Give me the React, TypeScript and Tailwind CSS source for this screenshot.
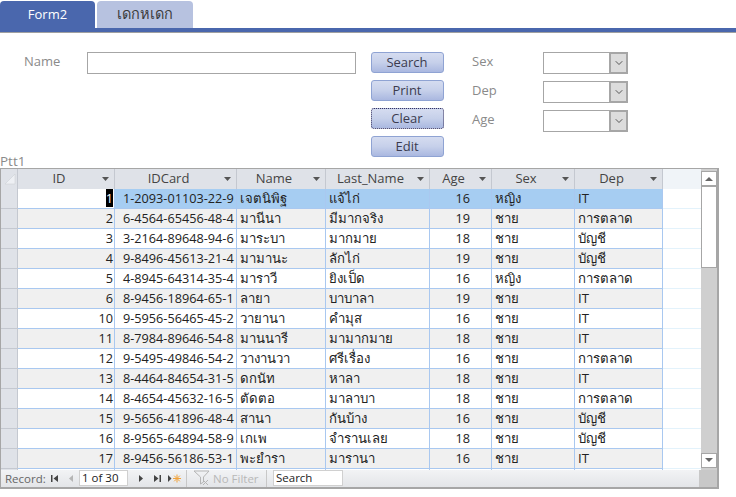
import { ChevronDown } from 'lucide-react'

const rows = [
  ['1', '1-2093-01103-22-9', 'เจตนิพิฐ', 'แจ้ไก่', '16', 'หญิง', 'IT'],
  ['2', '6-4564-65456-48-4', 'มานีนา', 'มีมากจริง', '19', 'ชาย', 'การตลาด'],
  ['3', '3-2164-89648-94-6', 'มาระบา', 'มากมาย', '18', 'ชาย', 'บัญชี'],
  ['4', '9-8496-45613-21-4', 'มามานะ', 'ลักไก่', '19', 'ชาย', 'บัญชี'],
  ['5', '4-8945-64314-35-4', 'มาราวี', 'ยิงเป็ด', '16', 'หญิง', 'การตลาด'],
  ['6', '8-9456-18964-65-1', 'ลายา', 'บาบาลา', '19', 'ชาย', 'IT'],
  ['10', '9-5956-56465-45-2', 'วายานา', 'คำมุส', '16', 'ชาย', 'IT'],
  ['11', '8-7984-89646-54-8', 'มานนารี', 'มามากมาย', '18', 'ชาย', 'IT'],
  ['12', '9-5495-49846-54-2', 'วางานวา', 'ศรีเรื่อง', '16', 'ชาย', 'การตลาด'],
  ['13', '8-4464-84654-31-5', 'ดกนัท', 'หาลา', '18', 'ชาย', 'IT'],
  ['14', '8-4654-45632-16-5', 'ตัดตอ', 'มาลาบา', '18', 'ชาย', 'การตลาด'],
  ['15', '9-5656-41896-48-4', 'สานา', 'กันบ้าง', '16', 'ชาย', 'บัญชี'],
  ['16', '8-9565-64894-58-9', 'เกเพ', 'จำรานเลย', '18', 'ชาย', 'บัญชี'],
  ['17', '8-9456-56186-53-1', 'พะยำรา', 'มารานา', '16', 'ชาย', 'IT'],
  ['', '', '', '', '', '', ''],
]

const cols = [
  { label: 'ID', w: 'w-[97px]' },
  { label: 'IDCard', w: 'w-[122px]' },
  { label: 'Name', w: 'w-[89px]' },
  { label: 'Last_Name', w: 'w-[104px]' },
  { label: 'Age', w: 'w-[62px]' },
  { label: 'Sex', w: 'w-[83px]' },
  { label: 'Dep', w: 'w-[88px]' },
]

function Btn({ label, focused }: { label: string; focused?: boolean }) {
  return (
    <button
      className={`w-[73px] h-[21px] rounded-[3px] border bg-gradient-to-b from-[#d5dcf0] via-[#c6d0ea] to-[#aab8e0] text-[13px] leading-[17px] pb-[1px] pr-[1px] text-[#3b3b4f] ${
        focused ? 'border-dotted border-[#3a3560]' : 'border-[#8fa3d3]'
      }`}
    >
      {label}
    </button>
  )
}

function Combo({ label }: { label: string }) {
  return (
    <div className="flex items-center h-[22px]">
      <span className="w-[71px] text-[13px] text-[#8a8a8a] -mt-[2px]">{label}</span>
      <div className="w-[85px] h-[22px] border border-[#a6a6a6] bg-white flex justify-end">
        <div className="w-[18px] h-full bg-[#dcdcdc] border-2 border-r-[1px] border-y-[1px] border-[#a6a6a6] flex items-center justify-center">
          <ChevronDown size={12} strokeWidth={1.6} className="text-[#333]" />
        </div>
      </div>
    </div>
  )
}

function Arrow() {
  return (
    <svg width="7" height="4" viewBox="0 0 7 4" className="absolute right-[5px] top-[8px]">
      <path d="M0 0h7L3.500 4z" fill="#555" />
    </svg>
  )
}

function Nav() {
  return (
    <div className="flex items-center h-full">
      <svg width="8" height="9" viewBox="0 0 8 9">
        <path d="M0 1h1.500v7H0zM7 1v7L2.500 4.500z" fill="#444" />
      </svg>
      <svg width="6" height="9" viewBox="0 0 6 9" className="ml-[9px]">
        <path d="M5 1v7L1 4.500z" fill="#b5b5b5" />
      </svg>
      <div className="ml-[5px] w-[49px] h-[16px] bg-white border border-[#d0d0d0] text-[11.5px] leading-[14px] pl-[2px] text-[#222]">
        1 of 30
      </div>
      <svg width="6" height="9" viewBox="0 0 6 9" className="ml-[10px]">
        <path d="M1 1v7l4-3.500z" fill="#444" />
      </svg>
      <svg width="8" height="9" viewBox="0 0 8 9" className="ml-[10px]">
        <path d="M0 1v7l4.500-3.500zM5.500 1H7v7H5.500z" fill="#444" />
      </svg>
      <svg width="13" height="9" viewBox="0 0 13 9" className="ml-[6px]">
        <path d="M0 1v7l3.500-3.500z" fill="#444" />
        <path d="M9 .5v8M5 4.500h8M6.200 1.700l5.600 5.600M11.800 1.700l-5.600 5.600" stroke="#f2a33a" strokeWidth="1" />
      </svg>
    </div>
  )
}

export default function App() {
  return (
    <div className="w-[736px] h-[497px] bg-white overflow-hidden font-['Open_Sans','Noto_Sans',sans-serif]">
      <div className="h-[33px] border-b border-[#a0a0a0] flex flex-col justify-between">
        <div className="flex pt-[1px] gap-[2px] h-[28px]">
          <div className="w-[95px] rounded-t-[4px] bg-[#4a67ad] text-white text-[13px] text-center leading-[26px] h-[31px]">
            Form2
          </div>
          <div className="w-[96px] rounded-t-[4px] bg-[#b7c2e0] text-[#3c3c3c] text-[14.5px] text-center leading-[25px]">
            เดกหเดก
          </div>
        </div>
        <div className="h-[4px] bg-[#4a67ad]" />
      </div>

      <div className="h-[135px] relative flex">
        <div className="flex items-start pt-[19px] pl-[24px] w-[371px]">
          <span className="w-[63px] text-[13px] text-[#8a8a8a]">Name</span>
          <div className="w-[269px] h-[22px] border border-[#a6a6a6]" />
        </div>
        <div className="flex flex-col gap-[7px] pt-[19px] w-[101px]">
          <Btn label="Search" />
          <Btn label="Print" />
          <Btn label="Clear" focused />
          <Btn label="Edit" />
        </div>
        <div className="flex flex-col gap-[7px] pt-[19px]">
          <Combo label="Sex" />
          <Combo label="Dep" />
          <Combo label="Age" />
        </div>
        <span className="absolute left-0 bottom-0 text-[13.5px] leading-[14px] text-[#8a8a8a]">Ptt1</span>
      </div>

      <div className="w-[719px] h-[321px] border border-[#a6a6a6] border-r-2 border-b-2 flex flex-col text-[12.7px] text-[#222]">
        <div className="flex h-[302px] min-h-0">
          <div className="flex-1 min-w-0 overflow-hidden">
            <div className="flex h-[20px]">
              <div className="w-[17px] bg-[#dfe2e8] border-r border-[#c4c8d0]">
                <svg width="16" height="16" viewBox="0 0 16 16">
                  <path d="M4 15L14 5v10z" fill="#eef0f4" stroke="#c9ccd3" strokeWidth="0.5" />
                </svg>
              </div>
              {cols.map((c) => (
                <div
                  key={c.label}
                  className={`${c.w} pr-[14px] relative bg-[#dfe2e8] border-r border-[#c4c8d0] text-center text-[13px] leading-[19px] text-[#444]`}
                >
                  {c.label}
                  <Arrow />
                </div>
              ))}
              <div className="flex-1 bg-[#f0f4f8]" />
            </div>
            {rows.map((r, i) => {
              const sel = i === 0
              const alt = i % 2 === 1
              const rowBg = sel ? 'bg-[#a6cdf2]' : alt ? 'bg-[#f0f0f0]' : 'bg-white'
              return (
                <div key={i} className="flex h-[20px] leading-[19px]">
                  <div className="w-[17px] shrink-0 bg-[#dfe2e8] border-r border-b border-[#c4c8d0]" />
                  <div className={`w-[97px] shrink-0 ${sel ? 'bg-white' : rowBg} border-r border-b border-[#a9c8f0] text-right pr-[1px]`}>
                    {sel ? <span className="bg-black text-white">{r[0]}</span> : r[0]}
                  </div>
                  <div className={`w-[122px] shrink-0 ${rowBg} border-r border-b border-[#a9c8f0] pl-[8px] whitespace-nowrap`}>{r[1]}</div>
                  <div className={`w-[89px] shrink-0 ${rowBg} border-r border-b border-[#a9c8f0] pl-[3px] whitespace-nowrap text-[13.2px]`}>{r[2]}</div>
                  <div className={`w-[104px] shrink-0 ${rowBg} border-r border-b border-[#a9c8f0] pl-[3px] whitespace-nowrap text-[13.2px]`}>{r[3]}</div>
                  <div className={`w-[62px] shrink-0 ${rowBg} border-r border-b border-[#a9c8f0] text-right pr-[21px]`}>{r[4]}</div>
                  <div className={`w-[83px] shrink-0 ${rowBg} border-r border-b border-[#a9c8f0] pl-[3px] text-[13.2px]`}>{r[5]}</div>
                  <div className={`w-[88px] shrink-0 ${rowBg} border-r border-b border-[#a9c8f0] pl-[3px] text-[13.2px]`}>{r[6]}</div>
                  <div className="flex-1 border-b border-[#e3f2fb]" />
                </div>
              )
            })}
          </div>
          <div className="w-[16px] shrink-0 bg-[#cfcfcf] flex flex-col justify-between pt-[2px] pb-[2px]">
            <div>
              <div className="h-[15px] bg-white border border-[#a6a6a6] flex items-center justify-center">
                <svg width="8" height="4" viewBox="0 0 8 4"><path d="M4 0l4 4H0z" fill="#666" /></svg>
              </div>
              <div className="h-[82px] bg-white border border-[#a6a6a6]" />
            </div>
            <div className="h-[15px] bg-white border border-[#a6a6a6] flex items-center justify-center">
              <svg width="8" height="4" viewBox="0 0 8 4"><path d="M0 0h8L4 4z" fill="#666" /></svg>
            </div>
          </div>
        </div>
        <div className="flex-1 flex">
          <div className="flex-1 flex items-center bg-gradient-to-b from-[#f2f3f5] to-[#e3e5e8] text-[11.5px] text-[#666]">
            <span className="pl-[4px] w-[50px] shrink-0">Record:</span>
            <Nav />
            <div className="ml-[5px] h-full border-x border-[#c8c8c8] flex items-center w-[81px] pl-[6px] gap-[2px] text-[#b8b8b8] whitespace-nowrap">
              <svg width="18" height="16" viewBox="0 0 18 16" className="shrink-0">
                <path d="M1 1h15L10.500 7v5l-3 2V7z" fill="none" stroke="#b5b5b5" />
                <path d="M10 10l5 5M15 10l-5 5" stroke="#b5b5b5" />
              </svg>
              No Filter
            </div>
            <div className="ml-[6px] w-[70px] h-[16px] bg-white border border-[#d0d0d0] text-[11.5px] leading-[14px] pl-[2px] text-[#222]">
              Search
            </div>
          </div>
          <div className="w-[18px] bg-[#c8c8c8]" />
        </div>
      </div>
    </div>
  )
}
